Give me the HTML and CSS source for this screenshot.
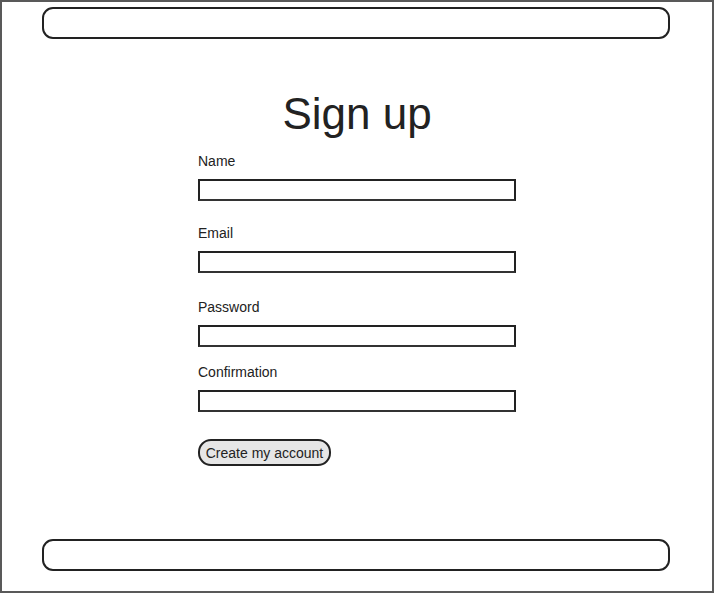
FILE: index.html
```html
<!DOCTYPE html>
<html lang="en">
<head>
<meta charset="utf-8">
<title>Sign up</title>
<link rel="stylesheet" href="styles.css">
</head>
<body>
  <header class="bar bar-top"></header>
  <main class="main">
    <h1 class="title">Sign up</h1>
    <form class="form">
      <div class="field field-name">
        <label class="label" for="name">Name</label>
        <input class="input" id="name" type="text">
      </div>
      <div class="field field-email">
        <label class="label" for="email">Email</label>
        <input class="input" id="email" type="email">
      </div>
      <div class="field field-password">
        <label class="label" for="password">Password</label>
        <input class="input" id="password" type="password">
      </div>
      <div class="field field-confirm">
        <label class="label" for="confirm">Confirmation</label>
        <input class="input" id="confirm" type="password">
      </div>
      <button class="button" type="button">Create my account</button>
    </form>
  </main>
  <footer class="bar bar-bottom"></footer>
</body>
</html>
```

FILE: styles.css
```css
html, body {
  margin: 0;
  padding: 0;
  height: 100%;
}

body {
  box-sizing: border-box;
  border: 2px solid #595959;
  background: #fff;
  color: #222;
  font-family: "Liberation Sans", Arial, sans-serif;
  display: flex;
  flex-direction: column;
}

.bar {
  box-sizing: border-box;
  height: 32px;
  margin: 0 42px 0 40px;
  border: 2px solid #222;
  border-radius: 11px;
  flex: none;
}

.bar-top {
  margin-top: 5px;
}

.bar-bottom {
  margin-top: auto;
  margin-bottom: 20px;
}

.main {
  display: flex;
  flex-direction: column;
  align-items: center;
}

.title {
  margin: 49px 0 0;
  font-size: 44px;
  line-height: 51px;
  font-weight: normal;
  color: #222;
}

.form {
  width: 318px;
  margin-top: 14px;
  display: flex;
  flex-direction: column;
  align-items: flex-start;
}

.field {
  display: flex;
  flex-direction: column;
  gap: 10px;
  width: 100%;
}

.field-email { margin-top: 24px; }
.field-password { margin-top: 26px; }
.field-confirm { margin-top: 17px; }

.label {
  font-size: 14px;
  line-height: 16px;
  color: #222;
}

.input {
  box-sizing: border-box;
  width: 318px;
  height: 22px;
  margin: 0;
  padding: 0 4px;
  border: 2px solid #222;
  border-bottom-color: #333;
  border-radius: 0;
  background: #fff;
  outline: none;
}

.button {
  box-sizing: border-box;
  margin-top: 27px;
  width: 133px;
  height: 27px;
  padding: 0;
  border: 2px solid #222;
  border-radius: 13px;
  background: #e6e6e6;
  color: #222;
  font-family: "Liberation Sans", Arial, sans-serif;
  font-size: 14px;
  text-align: center;
}
```
